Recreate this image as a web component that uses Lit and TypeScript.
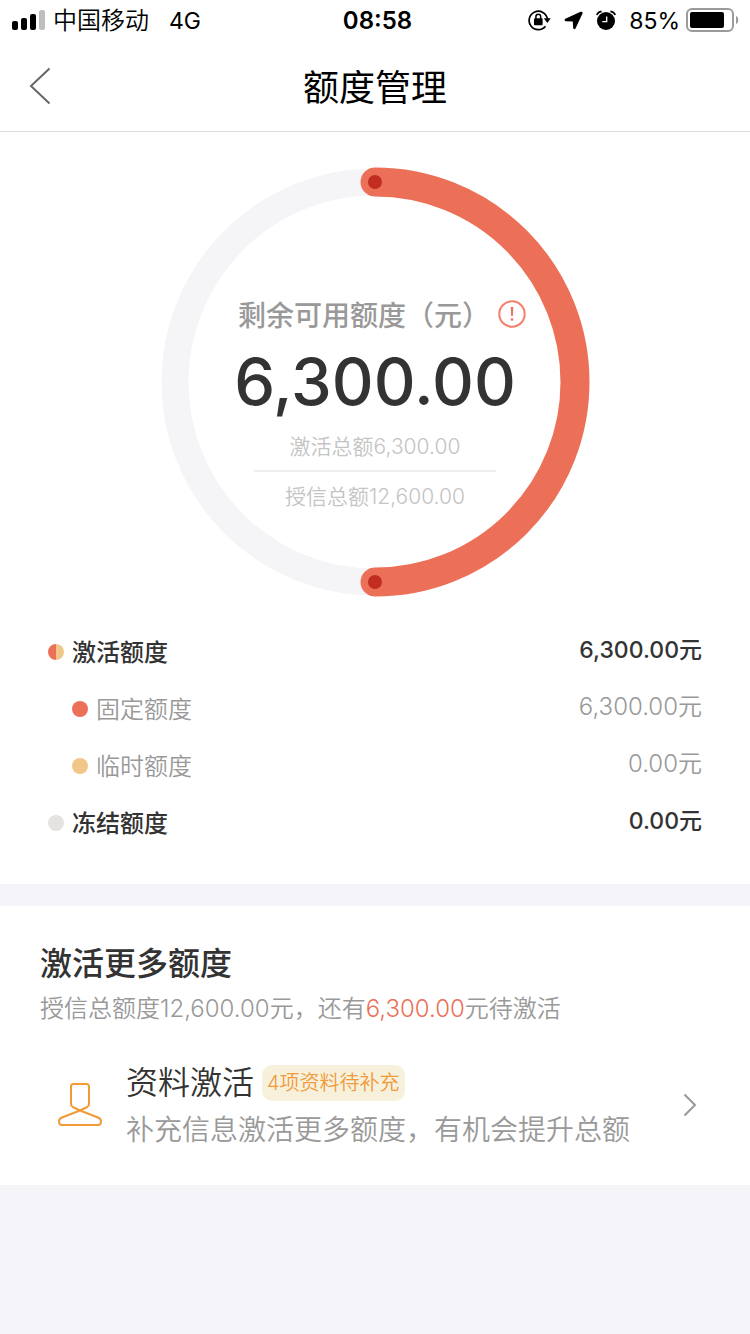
import { LitElement, html, css, svg } from "lit";
import { customElement, property } from "lit/decorators.js";

const RING_SIZE = 430;
const RING_RADIUS = 200;

interface QuotaRow {
  label: string;
  amount: string;
  dot: string;
  sub: boolean;
}

const rows: QuotaRow[] = [
  { label: "激活额度", amount: "6,300.00元", dot: "split", sub: false },
  { label: "固定额度", amount: "6,300.00元", dot: "fixed", sub: true },
  { label: "临时额度", amount: "0.00元", dot: "temp", sub: true },
  { label: "冻结额度", amount: "0.00元", dot: "frozen", sub: false },
];

@customElement("status-bar")
class StatusBar extends LitElement {
  static styles = css`
    :host {
      display: grid;
      grid-template-columns: 1fr auto 1fr;
      align-items: center;
      height: 40px;
      padding: 0 11px 0 12px;
      font-size: 24px;
      line-height: 38px;
      color: #000;
    }
    svg {
      display: block;
    }
    .left,
    .right {
      display: flex;
      align-items: center;
    }
    .carrier,
    .network,
    .time,
    .level {
      padding-top: 2px;
    }
    .carrier {
      margin-left: 8px;
      font-weight: 350;
    }
    .network {
      margin-left: 20px;
      font-size: 23px;
    }
    .time {
      padding-left: 4px;
      font-weight: 600;
    }
    .right {
      justify-content: flex-end;
    }
    .lock,
    .arrow,
    .alarm {
      margin-right: 13px;
    }
    .level {
      margin-right: 6px;
      font-size: 23px;
    }
  `;

  render() {
    return html`
      <div class="left">
        <svg width="33" height="20" viewBox="0 0 33 20" aria-hidden="true">
          <rect x="0" y="11" width="6" height="9" rx="2" />
          <rect x="9" y="8" width="6" height="12" rx="2" />
          <rect x="18" y="4" width="6" height="16" rx="2" />
          <rect x="27" y="0" width="6" height="20" rx="2" fill="#bfbfbf" />
        </svg>
        <span class="carrier">中国移动</span>
        <span class="network">4G</span>
      </div>
      <span class="time">08:58</span>
      <div class="right">
        <svg class="lock" width="23" height="22" viewBox="0 0 23 22" aria-hidden="true">
          <path d="M17.500 17.200 A9.200 9.200 0 1 1 19.400 10" fill="none" stroke="#000" stroke-width="1.700" />
          <path d="M15.800 9.300h7l-3.500 4.600z" />
          <rect x="6" y="9.300" width="8.600" height="7" rx="1" />
          <path d="M7.900 10V7.700a2.400 2.400 0 0 1 4.800 0V10" fill="none" stroke="#000" stroke-width="1.500" />
        </svg>
        <svg class="arrow" width="19" height="19" viewBox="0 0 19 19" aria-hidden="true">
          <path d="M16.600.8 1.300 7.800Q-.4 9.400 1.600 10.200L8.800 10.400 9.200 17.200Q10.100 19.300 11.500 17.500L18.500 2.600Q19 .1 16.600.8z" />
        </svg>
        <svg class="alarm" width="20" height="20" viewBox="0 0 20 20" aria-hidden="true">
          <circle cx="10" cy="11" r="9" />
          <path d="M.8 5 Q2 1.800 5.600 1.300" fill="none" stroke="#000" stroke-width="1.700" />
          <path d="M19.200 5 Q18 1.800 14.400 1.300" fill="none" stroke="#000" stroke-width="1.700" />
          <path d="M10.700 6.500v5.200H6.300" fill="none" stroke="#fff" stroke-width="1.300" />
        </svg>
        <span class="level">85%</span>
        <svg width="53" height="24" viewBox="0 0 53 24" aria-hidden="true">
          <rect x="1" y="1" width="46" height="22" rx="5" fill="#fff" stroke="#9b9b9b" stroke-width="2" />
          <rect x="4" y="4" width="34" height="16" rx="2" />
          <path d="M50 8c3 1 3 7 0 8z" fill="#9b9b9b" />
        </svg>
      </div>
    `;
  }
}

@customElement("quota-ring")
class QuotaRing extends LitElement {
  @property({ type: Number }) ratio = 0.5;

  static styles = css`
    :host {
      display: grid;
      justify-items: center;
    }
    .ring,
    .info {
      grid-area: 1 / 1;
    }
    .ring {
      display: block;
    }
    .info {
      display: flex;
      flex-direction: column;
      align-items: center;
      z-index: 1;
      padding-top: 127px;
    }
    .caption {
      display: flex;
      align-items: center;
      height: 40px;
      margin-left: 14px;
      font-size: 28px;
      font-weight: 500;
      color: #999;
    }
    .tip {
      display: block;
      width: 28px;
      height: 28px;
      margin-left: 8px;
      padding: 0;
      border: 0;
      background: none;
    }
    .tip svg {
      display: block;
    }
    .amount {
      font-size: 65px;
      line-height: 80px;
      margin-top: 8px;
      font-weight: 500;
      color: #333;
    }
    .line {
      font-size: 21px;
      line-height: 32px;
      font-weight: 350;
      color: #c4c4c4;
    }
    .active {
      width: 242px;
      margin-top: 9px;
      padding-bottom: 7px;
      border-bottom: 2px solid #eee;
      text-align: center;
    }
    .credit {
      margin-top: 9px;
    }
  `;

  render() {
    const c = RING_SIZE / 2;
    const angle = this.ratio * Math.PI * 2;
    const ex = c + RING_RADIUS * Math.sin(angle);
    const ey = c - RING_RADIUS * Math.cos(angle);
    const large = this.ratio > 0.5 ? 1 : 0;
    const arc = `M${c} ${c - RING_RADIUS} A${RING_RADIUS} ${RING_RADIUS} 0 ${large} 1 ${ex} ${ey}`;
    return html`
      <svg class="ring" width=${RING_SIZE} height=${RING_SIZE} viewBox="0 0 ${RING_SIZE} ${RING_SIZE}" aria-hidden="true">
        ${svg`
          <circle cx=${c} cy=${c} r=${RING_RADIUS} fill="none" stroke="#f5f5f8" stroke-width="27" />
          <path d=${arc} fill="none" stroke="#ec7057" stroke-width="29" stroke-linecap="round" />
          <circle cx=${c} cy=${c - RING_RADIUS} r="7" fill="#c12c23" />
          <circle cx=${ex} cy=${ey} r="7" fill="#c12c23" />
        `}
      </svg>
      <div class="info">
        <div class="caption">
          <span>剩余可用额度（元）</span>
          <button class="tip" type="button" aria-label="额度说明">
            <svg width="28" height="28" viewBox="0 0 28 28">
              <circle cx="14" cy="14" r="12.700" fill="none" stroke="#f47e68" stroke-width="2" />
              <path d="M12.700 7h2.600l-.5 9h-1.600z" fill="#ec7057" />
              <circle cx="14" cy="19.500" r="1.300" fill="#ec7057" />
            </svg>
          </button>
        </div>
        <div class="amount">6,300.00</div>
        <div class="line active">激活总额6,300.00</div>
        <div class="line credit">授信总额12,600.00</div>
      </div>
    `;
  }
}

@customElement("app-root")
class AppRoot extends LitElement {
  static styles = css`
    :host {
      display: block;
      min-height: 100vh;
      background: #f4f4f9;
      font-family: Inter, "Noto Sans CJK SC", sans-serif;
      color: #333;
    }
    .top,
    .summary,
    .more {
      background: #fff;
    }
    .nav {
      display: grid;
      grid-template-columns: 80px 1fr 80px;
      align-items: center;
      height: 91px;
      border-bottom: 1px solid #ddd;
    }
    .back {
      display: block;
      width: 80px;
      height: 80px;
      padding: 0 0 0 29px;
      border: 0;
      background: none;
    }
    .back svg,
    .chevron,
    .person {
      display: block;
    }
    h1 {
      margin: 0;
      padding-top: 4px;
      font-size: 36px;
      line-height: 52px;
      font-weight: 400;
      text-align: center;
      color: #000;
    }
    .summary {
      padding: 35px 48px 33px;
    }
    .rows {
      margin: 26px 0 0;
    }
    .row {
      display: flex;
      align-items: center;
      height: 57px;
      font-size: 24px;
      font-weight: 500;
    }
    .row.sub {
      padding-left: 24px;
      font-weight: 350;
      color: #999;
    }
    .dot {
      width: 16px;
      height: 16px;
      margin-right: 8px;
      border-radius: 50%;
    }
    .split {
      background: linear-gradient(90deg, #ec7057 50%, #f1c787 50%);
    }
    .fixed {
      background: #ec7057;
    }
    .temp {
      background: #f1c787;
    }
    .frozen {
      background: #e6e2e2;
    }
    .label {
      flex: 1;
      padding-bottom: 2px;
    }
    .value {
      margin: 0;
      padding-bottom: 8px;
      font-size: 23px;
    }
    .sub .value {
      font-size: 24px;
    }
    .more {
      margin-top: 22px;
      padding: 35px 40px 35px;
    }
    h2 {
      margin: 0;
      font-size: 32px;
      line-height: 46px;
      font-weight: 500;
    }
    .desc {
      margin: 4px 0 0;
      font-size: 24px;
      line-height: 36px;
      font-weight: 350;
      color: #999;
    }
    .hot {
      color: #ec7057;
    }
    .entry {
      display: flex;
      align-items: center;
      margin-top: 33px;
      padding: 0 13px 0 18px;
      color: inherit;
      text-decoration: none;
    }
    .text {
      flex: 1;
      margin-left: 24px;
    }
    .head {
      display: flex;
      align-items: center;
      font-size: 32px;
      line-height: 46px;
      font-weight: 350;
    }
    .tag {
      margin-left: 8px;
      padding: 0 5px;
      border-radius: 10px;
      background: #f7f1dc;
      font-size: 20px;
      line-height: 36px;
      color: #f09a3a;
    }
    .hint {
      padding-top: 4px;
      font-size: 28px;
      line-height: 40px;
      font-weight: 350;
      color: #999;
    }
  `;

  render() {
    return html`
      <header class="top">
        <status-bar></status-bar>
        <nav class="nav">
          <button class="back" type="button" aria-label="返回">
            <svg width="22" height="38" viewBox="0 0 22 38">
              <path d="M20.500 1.500 2 19l18.500 17.500" fill="none" stroke="#666" stroke-width="2" />
            </svg>
          </button>
          <h1>额度管理</h1>
        </nav>
      </header>
      <main>
        <section class="summary">
          <quota-ring .ratio=${0.5}></quota-ring>
          <dl class="rows">
            ${rows.map(
              (r) => html`
                <div class="row ${r.sub ? "sub" : ""}">
                  <span class="dot ${r.dot}"></span>
                  <dt class="label">${r.label}</dt>
                  <dd class="value">${r.amount}</dd>
                </div>
              `
            )}
          </dl>
        </section>
        <section class="more">
          <h2>激活更多额度</h2>
          <p class="desc">授信总额度12,600.00元，还有<span class="hot">6,300.00</span>元待激活</p>
          <a class="entry" href="#profile">
            <svg class="person" width="44" height="44" viewBox="0 0 44 44" aria-hidden="true">
              <path
                d="M15.500 1h13a2.500 2.500 0 0 1 2.500 2.500v17.500q0 2-1.800 3L22 27.500 14.800 24Q13 23 13 21V3.500A2.500 2.500 0 0 1 15.500 1z M22 27.500 4 34.500C1.500 35.500 1 37 1 38.500 1 41 2.500 42 4.500 42h35c2 0 3.500-1 3.500-3.500 0-1.500-.5-3-3-4z"
                fill="none" stroke="#f29a38" stroke-width="2" stroke-linejoin="round"
              />
            </svg>
            <div class="text">
              <div class="head">资料激活<span class="tag">4项资料待补充</span></div>
              <div class="hint">补充信息激活更多额度，有机会提升总额</div>
            </div>
            <svg class="chevron" width="14" height="24" viewBox="0 0 14 24" aria-hidden="true">
              <path d="M1.500 1.500 12 12 1.500 22.500" fill="none" stroke="#999" stroke-width="2" />
            </svg>
          </a>
        </section>
      </main>
    `;
  }
}
